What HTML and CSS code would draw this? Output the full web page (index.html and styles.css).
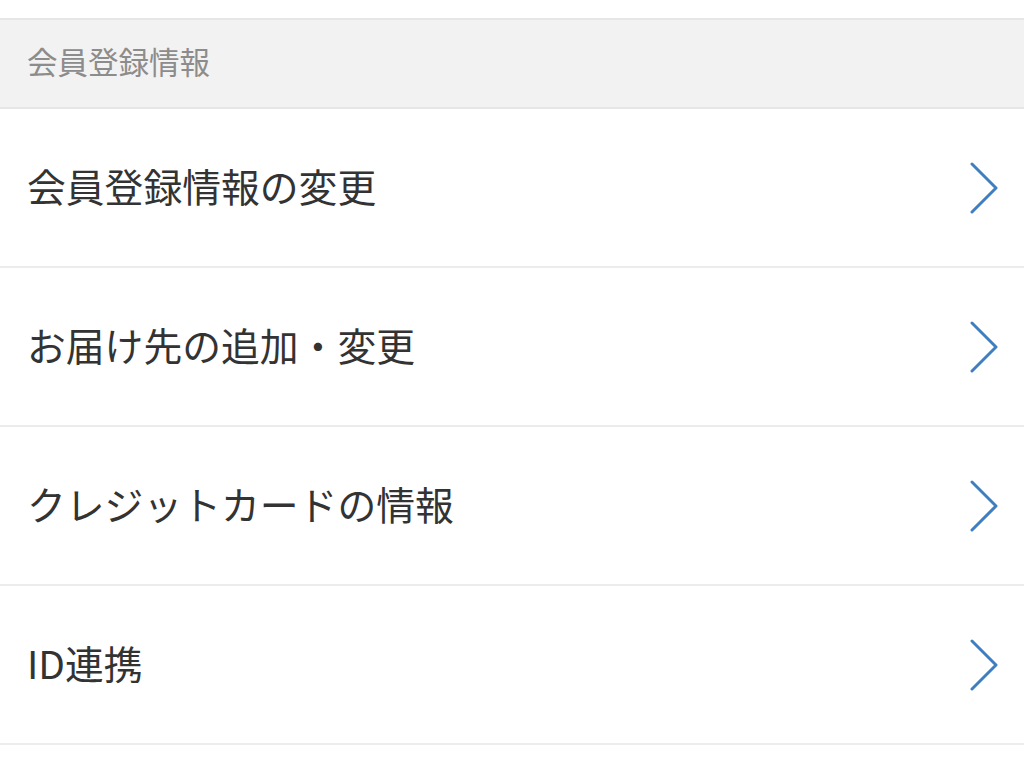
FILE: index.html
```html
<!DOCTYPE html>
<html lang="ja">
<head>
<meta charset="utf-8">
<link rel="stylesheet" href="styles.css">
</head>
<body>
<div class="top"></div>
<div class="section-head"><span class="head-label">会員登録情報</span></div>
<ul class="menu">
  <li class="item"><span class="label">会員登録情報の変更</span><svg class="chev" viewBox="0 0 28 52" width="28" height="52"><polyline points="2,2 26,26 2,50"/></svg></li>
  <li class="item"><span class="label">お届け先の追加・変更</span><svg class="chev" viewBox="0 0 28 52" width="28" height="52"><polyline points="2,2 26,26 2,50"/></svg></li>
  <li class="item"><span class="label">クレジットカードの情報</span><svg class="chev" viewBox="0 0 28 52" width="28" height="52"><polyline points="2,2 26,26 2,50"/></svg></li>
  <li class="item"><span class="label">ID連携</span><svg class="chev" viewBox="0 0 28 52" width="28" height="52"><polyline points="2,2 26,26 2,50"/></svg></li>
</ul>
</body>
</html>
```
FILE: styles.css
```css
html, body {
  margin: 0;
  padding: 0;
  background: #ffffff;
  font-family: "Noto Sans CJK JP", "Noto Sans", sans-serif;
}
.top {
  height: 18px;
}
.section-head {
  border-top: 2px solid #e6e6e6;
  border-bottom: 2px solid #e6e6e6;
  background: #f2f2f2;
  height: 87px;
  box-sizing: content-box;
  display: flex;
  align-items: center;
  padding-left: 27px;
  font-size: 30.5px;
  color: #8c8c8c;
}
.head-label {
  padding-bottom: 6px;
}
.menu {
  list-style: none;
  margin: 0;
  padding: 0;
}
.item {
  height: 157px;
  border-bottom: 2px solid #ececec;
  display: flex;
  align-items: center;
  justify-content: space-between;
  padding: 0 26px 0 27px;
}
.label {
  font-size: 38.8px;
  color: #333333;
  padding-bottom: 6px;
}
.chev {
  display: block;
}
.chev polyline {
  fill: none;
  stroke: #3f7fbf;
  stroke-width: 3;
  stroke-linecap: round;
  stroke-linejoin: round;
}
```
